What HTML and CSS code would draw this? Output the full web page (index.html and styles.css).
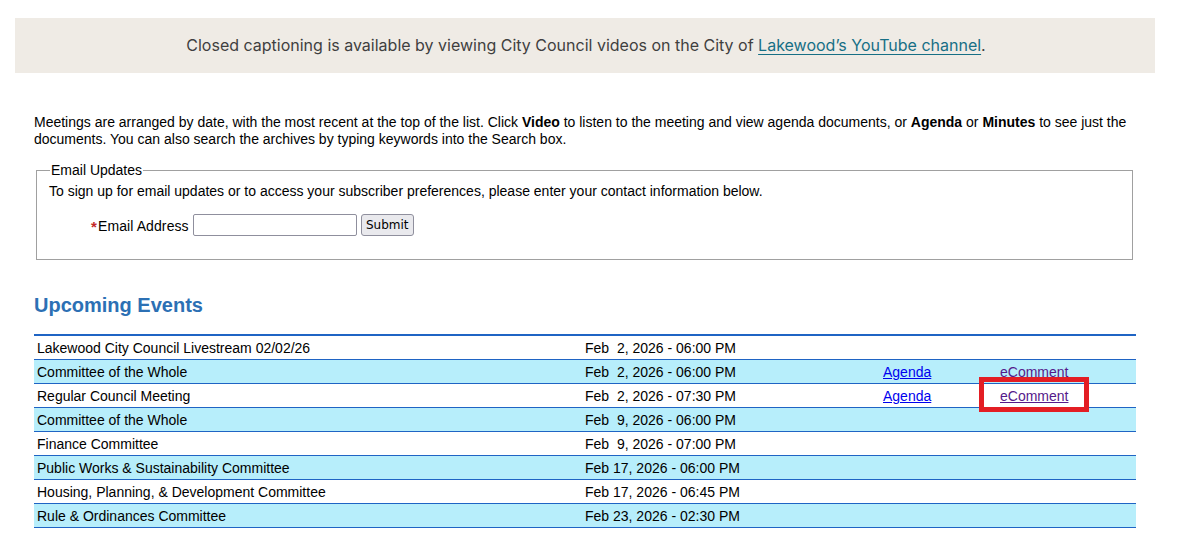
FILE: index.html
```html
<!DOCTYPE html>
<html>
<head>
<meta charset="utf-8">
<link rel="stylesheet" href="styles.css">
</head>
<body>
<div class="banner">Closed captioning is available by viewing City Council videos on the City of <a class="yt" href="#">Lakewood’s YouTube channel</a>.</div>
<div class="content">
  <p class="intro">Meetings are arranged by date, with the most recent at the top of the list. Click <b>Video</b> to listen to the meeting and view agenda documents, or <b>Agenda</b> or <b>Minutes</b> to see just the documents. You can also search the archives by typing keywords into the Search box.</p>
  <fieldset class="updates">
    <legend>Email Updates</legend>
    <div class="signup">To sign up for email updates or to access your subscriber preferences, please enter your contact information below.</div>
    <div class="form-row">
      <label><span class="req">*</span>Email Address</label>
      <input class="email" type="text">
      <button class="submit">Submit</button>
    </div>
  </fieldset>
  <h2 class="heading">Upcoming Events</h2>
  <table class="events">
    <tr><td class="c-name">Lakewood City Council Livestream 02/02/26</td><td class="c-date">Feb&nbsp; 2, 2026 - 06:00 PM</td><td class="c-agenda"></td><td class="c-ec"></td></tr>
    <tr class="alt"><td class="c-name">Committee of the Whole</td><td class="c-date">Feb&nbsp; 2, 2026 - 06:00 PM</td><td class="c-agenda"><a class="lnk" href="#">Agenda</a></td><td class="c-ec"><a class="vis" href="#">eComment</a></td></tr>
    <tr><td class="c-name">Regular Council Meeting</td><td class="c-date">Feb&nbsp; 2, 2026 - 07:30 PM</td><td class="c-agenda"><a class="lnk" href="#">Agenda</a></td><td class="c-ec"><span class="hl-wrap"><a class="vis" href="#">eComment</a><span class="hl"></span></span></td></tr>
    <tr class="alt"><td class="c-name">Committee of the Whole</td><td class="c-date">Feb&nbsp; 9, 2026 - 06:00 PM</td><td class="c-agenda"></td><td class="c-ec"></td></tr>
    <tr><td class="c-name">Finance Committee</td><td class="c-date">Feb&nbsp; 9, 2026 - 07:00 PM</td><td class="c-agenda"></td><td class="c-ec"></td></tr>
    <tr class="alt"><td class="c-name">Public Works &amp; Sustainability Committee</td><td class="c-date">Feb 17, 2026 - 06:00 PM</td><td class="c-agenda"></td><td class="c-ec"></td></tr>
    <tr><td class="c-name">Housing, Planning, &amp; Development Committee</td><td class="c-date">Feb 17, 2026 - 06:45 PM</td><td class="c-agenda"></td><td class="c-ec"></td></tr>
    <tr class="alt"><td class="c-name">Rule &amp; Ordinances Committee</td><td class="c-date">Feb 23, 2026 - 02:30 PM</td><td class="c-agenda"></td><td class="c-ec"></td></tr>
  </table>
</div>
</body>
</html>
```
FILE: styles.css
```css
html, body { margin: 0; padding: 0; background: #fff; }
body { font-family: "Liberation Sans", Arial, sans-serif; font-size: 14px; color: #000; }

.banner {
  margin: 18px 0 0 15px;
  width: 1140px;
  height: 55px;
  box-sizing: border-box;
  background: #efebe5;
  font-family: Inter, "Noto Sans", sans-serif;
  font-size: 16px;
  color: #3f3f3f;
  text-align: center;
  line-height: 54px;
  padding-left: 2px;
}
.yt { color: #176f85; text-decoration: underline; text-decoration-thickness: 1px; text-underline-offset: 3px; }

.content { margin-left: 34px; width: 1102px; }

.intro { margin: 41px 0 0 0; line-height: 17px; }

.updates {
  margin: 14px 3px 0 2px;
  padding: 0 12px 0 12px;
  border: 1px solid #a0a0a0;
  height: 98px;
  box-sizing: border-box;
}
.updates legend { padding: 0 1px; margin-left: 1px; line-height: 16px; }
.signup { margin-top: 5px; line-height: 16px; }
.form-row { margin-top: 15px; display: flex; align-items: center; padding-left: 41px; }
.req { color: #c42a2a; font-size: 15px; font-weight: bold; margin-right: 1px; position: relative; top: 1px; }
.form-row label { margin-right: 4px; letter-spacing: 0.1px; padding-left: 1px; }
.email {
  width: 164px; height: 22px; box-sizing: border-box;
  border: 1px solid #8f8f9d; border-radius: 2px; padding: 0 3px; margin: 0;
}
.submit {
  margin-left: 4px; height: 22px; width: 53px; padding: 0;
  font-family: "DejaVu Sans", sans-serif; font-size: 12px;
  background: #e9e9ed; border: 1px solid #8f8f9d; border-radius: 3px; color: #000;
}

.heading {
  margin: 33px 0 0 0;
  font-size: 20px; line-height: 24px;
  color: #2c70b4; font-weight: bold;
}

.events {
  margin-top: 17px;
  width: 1102px;
  border-collapse: collapse;
  border-top: 2px solid #1f64c4;
}
.events td {
  height: 23px; padding: 0 3px;
  border-bottom: 1px solid #1f64c4;
  line-height: 16px; vertical-align: middle; white-space: nowrap;
}
.events tr.alt td { background: #b7eefb; }
.c-name { width: 542px; }
.c-date { width: 292px; }
.c-agenda { width: 111px; }
.c-ec { text-align: left; }
.lnk { color: #0000ee; }
.vis { color: #551a8b; }
.hl-wrap { position: relative; display: inline-block; }
.hl {
  position: absolute;
  left: -21px; top: -11px;
  width: 110px; height: 35px;
  box-sizing: border-box;
  border: 5px solid #e31e24;
}
```
